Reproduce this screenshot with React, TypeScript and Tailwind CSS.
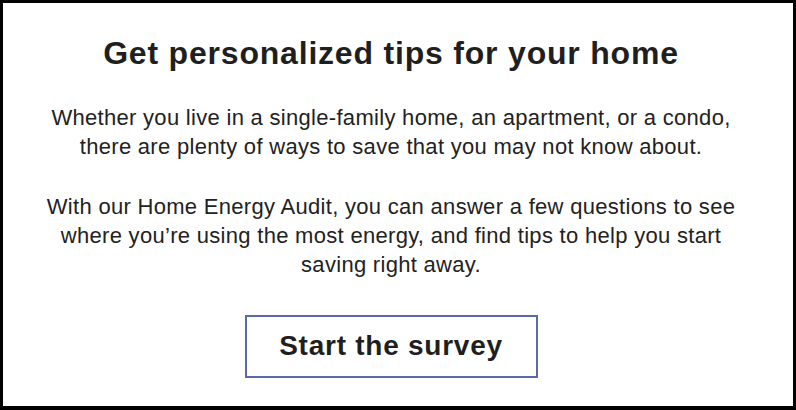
export default function App() {
  return (
    <div
      className="w-[796px] h-[410px] bg-white border-[3px] border-b-[4px] border-black flex flex-col items-center pt-[31px] pr-[14px] text-[#222222]"
      style={{ fontFamily: '"Liberation Sans", Arial, Helvetica, sans-serif' }}
    >
      <h1 className="text-[32px] font-bold leading-[38px] tracking-[0.8px] text-[#1f1f1f] whitespace-nowrap">
        Get personalized tips for your home
      </h1>
      <p className="mt-[32px] text-[22px] leading-[28.7px] tracking-[0.3px] text-center whitespace-nowrap">
        Whether you live in a single-family home, an apartment, or a condo,
        <br />
        there are plenty of ways to save that you may not know about.
      </p>
      <p className="mt-[32px] text-[22px] leading-[28.7px] tracking-[0.3px] text-center whitespace-nowrap">
        With our Home Energy Audit, you can answer a few questions to see
        <br />
        where you’re using the most energy, and find tips to help you start
        <br />
        saving right away.
      </p>
      <button className="mt-[35px] w-[293px] h-[63px] border-2 border-[#5b69a8] bg-white text-[28px] font-bold tracking-[0.75px] text-[#1f1f1f] flex items-center justify-center">
        Start the survey
      </button>
    </div>
  );
}
